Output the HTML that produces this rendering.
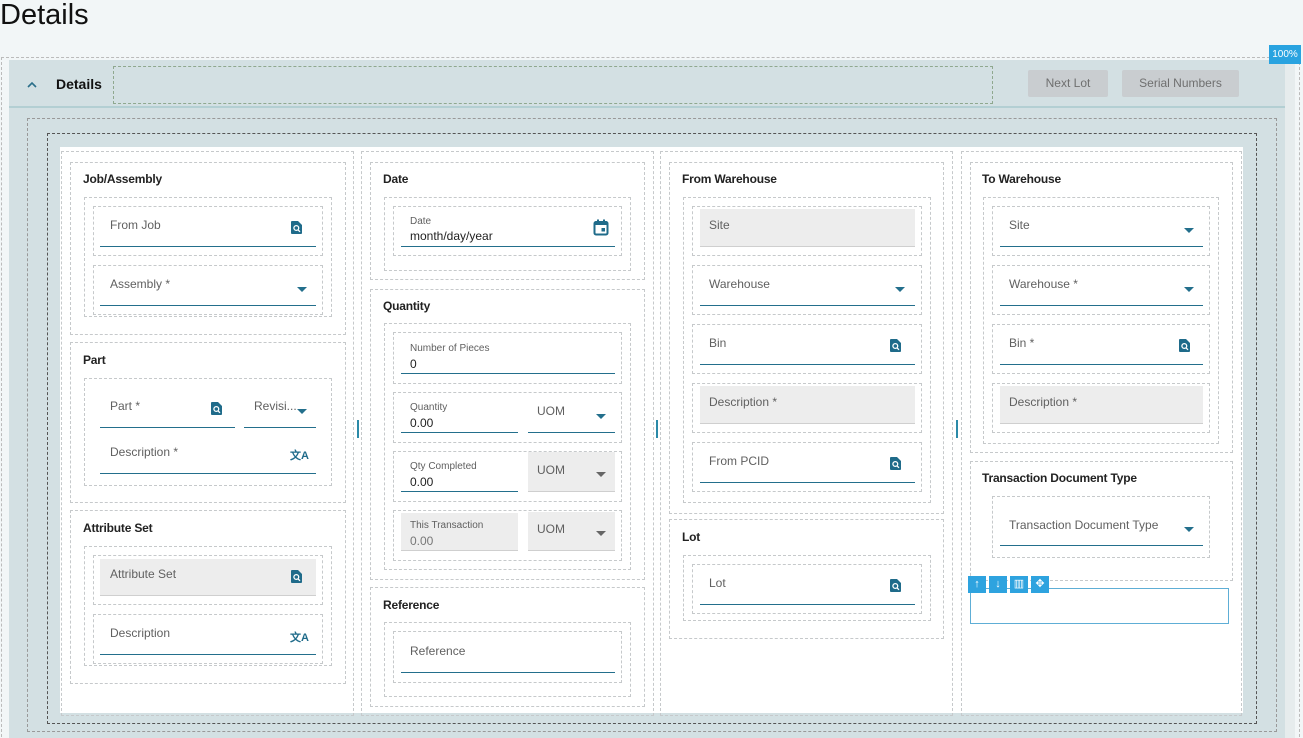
<!DOCTYPE html>
<html><head><meta charset="utf-8"><style>
*{box-sizing:border-box;margin:0;padding:0}
html,body{width:1303px;height:738px;overflow:hidden}
body{background:#f2f6f7;font-family:"Liberation Sans",sans-serif;position:relative;color:#222}
.a{position:absolute}
.d{position:absolute;border:1px dashed #c6c9cb}
.t{position:absolute;font-size:12px;font-weight:bold;color:#222;letter-spacing:-0.2px}
.l{position:absolute;font-size:12px;color:#606060}
.s{position:absolute;font-size:10px;color:#606060}
.v{position:absolute;font-size:12px;color:#222}
.u{position:absolute;height:1px;background:#236f8c}
.gr{position:absolute;background:#ededed;border-bottom:1px solid #cfcfcf}
.c{position:absolute;width:0;height:0;border-left:5px solid transparent;border-right:5px solid transparent;border-top:5px solid #236f8c}
.cg{border-top-color:#666}
.btn{position:absolute;background:#c9cdd0;color:#6f6f6f;font-size:12px;text-align:center;line-height:27px;border-radius:2px}
.tb{position:absolute;width:18px;height:17px;background:#2ea3df;color:#fff;font-size:11px;text-align:center;line-height:17px}
.tr{position:absolute;font-size:11px;color:#1f6b8a;font-weight:bold}
</style></head><body>
<div class="a" style="left:0;top:-1px;font-size:29px;color:#111">Details</div>
<div class="a" style="left:1px;top:57px;width:1299px;height:690px;border:1px dashed #bbb"></div>
<div class="a" style="left:9px;top:60px;width:1285px;height:690px;background:#d3e0e3"></div>
<div class="a" style="left:9px;top:106px;width:1285px;height:2px;background:#b3cfd3"></div>
<div class="a" style="left:1285px;top:60px;width:10px;height:680px;background:#e6eced"></div>
<div class="a" style="left:1269px;top:45px;width:32px;height:19px;background:#29a3e0;color:#fff;font-size:10px;line-height:19px;text-align:center">100%</div>
<div class="a" style="left:26px;top:78px;width:12px;height:12px"><svg width="12" height="12"><path d="M2 8 L6 4 L10 8" stroke="#2b6f8a" stroke-width="1.6" fill="none"/></svg></div>
<div class="a" style="left:56px;top:76px;font-size:14px;font-weight:bold;color:#111">Details</div>
<div class="a" style="left:113px;top:66px;width:880px;height:38px;border:1px dashed #8fa88f"></div>
<div class="btn" style="left:1028px;top:70px;width:80px">Next Lot</div>
<div class="btn" style="left:1122px;top:70px;width:117px">Serial Numbers</div>
<div class="a" style="left:27px;top:118px;width:1250px;height:614px;border:1px dashed #999"></div>
<div class="a" style="left:47px;top:133px;width:1210px;height:591px;border:1px dashed #555"></div>
<div class="a" style="left:60px;top:147px;width:1183px;height:566px;background:#fff"></div>
<div class="d" style="left:61px;top:151px;width:293px;height:565px"></div>
<div class="d" style="left:361px;top:151px;width:293px;height:565px"></div>
<div class="d" style="left:660px;top:151px;width:293px;height:565px"></div>
<div class="d" style="left:961px;top:151px;width:281px;height:565px"></div>
<div class="a" style="left:357px;top:420px;width:2px;height:18px;background:#2b8aa8"></div>
<div class="a" style="left:656px;top:420px;width:2px;height:18px;background:#2b8aa8"></div>
<div class="a" style="left:956px;top:420px;width:2px;height:18px;background:#2b8aa8"></div>

<!-- col1 -->
<div class="d" style="left:70px;top:162px;width:276px;height:173px"></div>
<div class="t" style="left:83px;top:172px">Job/Assembly</div>
<div class="d" style="left:84px;top:197px;width:248px;height:120px"></div>
<div class="d" style="left:93px;top:206px;width:230px;height:50px"></div>
<div class="l" style="left:110px;top:218px">From Job</div>
<div class="u" style="left:100px;top:246px;width:216px"></div>
<svg class="a" style="left:291px;top:221px" width="11" height="13"><path d="M1 0h6l4 4v8a1 1 0 0 1-1 1H1a1 1 0 0 1-1-1V1a1 1 0 0 1 1-1z" fill="#1f6b8a"/><circle cx="5.3" cy="7" r="2.4" stroke="#fff" stroke-width="1.3" fill="none"/><path d="M7 8.8l2 2" stroke="#fff" stroke-width="1.3"/></svg>
<div class="d" style="left:93px;top:265px;width:230px;height:50px"></div>
<div class="l" style="left:110px;top:277px">Assembly *</div>
<div class="c" style="left:297px;top:287px"></div>
<div class="u" style="left:100px;top:305px;width:216px"></div>

<div class="d" style="left:70px;top:342px;width:276px;height:161px"></div>
<div class="t" style="left:83px;top:353px">Part</div>
<div class="d" style="left:84px;top:378px;width:248px;height:108px"></div>
<div class="l" style="left:110px;top:399px">Part *</div>
<svg class="a" style="left:211px;top:402px" width="11" height="13"><path d="M1 0h6l4 4v8a1 1 0 0 1-1 1H1a1 1 0 0 1-1-1V1a1 1 0 0 1 1-1z" fill="#1f6b8a"/><circle cx="5.3" cy="7" r="2.4" stroke="#fff" stroke-width="1.3" fill="none"/><path d="M7 8.8l2 2" stroke="#fff" stroke-width="1.3"/></svg>
<div class="u" style="left:100px;top:427px;width:135px"></div>
<div class="l" style="left:254px;top:399px">Revisi...</div>
<div class="c" style="left:297px;top:409px"></div>
<div class="u" style="left:244px;top:427px;width:72px"></div>
<div class="l" style="left:110px;top:445px">Description *</div>
<div class="tr" style="left:290px;top:447px">文A</div>
<div class="u" style="left:100px;top:473px;width:216px"></div>

<div class="d" style="left:70px;top:510px;width:276px;height:174px"></div>
<div class="t" style="left:83px;top:521px">Attribute Set</div>
<div class="d" style="left:84px;top:546px;width:248px;height:120px"></div>
<div class="d" style="left:93px;top:555px;width:230px;height:50px"></div>
<div class="gr" style="left:100px;top:559px;width:216px;height:37px"></div>
<div class="l" style="left:110px;top:567px">Attribute Set</div>
<svg class="a" style="left:291px;top:570px" width="11" height="13"><path d="M1 0h6l4 4v8a1 1 0 0 1-1 1H1a1 1 0 0 1-1-1V1a1 1 0 0 1 1-1z" fill="#1f6b8a"/><circle cx="5.3" cy="7" r="2.4" stroke="#fff" stroke-width="1.3" fill="none"/><path d="M7 8.8l2 2" stroke="#fff" stroke-width="1.3"/></svg>
<div class="d" style="left:93px;top:614px;width:230px;height:50px"></div>
<div class="l" style="left:110px;top:626px">Description</div>
<div class="tr" style="left:290px;top:629px">文A</div>
<div class="u" style="left:100px;top:654px;width:216px"></div>

<!-- col2 -->
<div class="d" style="left:370px;top:162px;width:275px;height:118px"></div>
<div class="t" style="left:383px;top:172px">Date</div>
<div class="d" style="left:384px;top:197px;width:247px;height:74px"></div>
<div class="d" style="left:393px;top:206px;width:229px;height:50px"></div>
<div class="s" style="left:410px;top:216px">Date</div>
<div class="v" style="left:410px;top:229px">month/day/year</div>
<svg class="a" style="left:593px;top:219px" width="16" height="17"><rect x="1.5" y="3" width="13" height="12.5" rx="1.5" stroke="#1f6b8a" stroke-width="2" fill="none"/><rect x="1.5" y="3" width="13" height="3" fill="#1f6b8a"/><rect x="4" y="0.5" width="2" height="3" fill="#1f6b8a"/><rect x="10" y="0.5" width="2" height="3" fill="#1f6b8a"/><rect x="8.5" y="9" width="3.5" height="3.5" fill="#1f6b8a"/></svg>
<div class="u" style="left:401px;top:246px;width:214px"></div>

<div class="d" style="left:370px;top:289px;width:275px;height:291px"></div>
<div class="t" style="left:383px;top:299px">Quantity</div>
<div class="d" style="left:384px;top:323px;width:247px;height:247px"></div>
<div class="d" style="left:393px;top:332px;width:229px;height:52px"></div>
<div class="s" style="left:410px;top:343px">Number of Pieces</div>
<div class="v" style="left:410px;top:357px">0</div>
<div class="u" style="left:401px;top:373px;width:214px"></div>
<div class="d" style="left:393px;top:392px;width:229px;height:51px"></div>
<div class="s" style="left:410px;top:402px">Quantity</div>
<div class="v" style="left:410px;top:416px">0.00</div>
<div class="u" style="left:401px;top:432px;width:117px"></div>
<div class="l" style="left:537px;top:404px">UOM</div>
<div class="c" style="left:596px;top:414px"></div>
<div class="u" style="left:528px;top:432px;width:87px"></div>
<div class="d" style="left:393px;top:451px;width:229px;height:51px"></div>
<div class="s" style="left:410px;top:461px">Qty Completed</div>
<div class="v" style="left:410px;top:475px">0.00</div>
<div class="u" style="left:401px;top:491px;width:117px"></div>
<div class="gr" style="left:528px;top:452px;width:87px;height:40px"></div>
<div class="l" style="left:537px;top:463px">UOM</div>
<div class="c cg" style="left:596px;top:472px"></div>
<div class="d" style="left:393px;top:510px;width:229px;height:51px"></div>
<div class="gr" style="left:401px;top:513px;width:117px;height:38px"></div>
<div class="s" style="left:410px;top:520px">This Transaction</div>
<div class="a" style="left:410px;top:534px;font-size:12px;color:#777">0.00</div>
<div class="gr" style="left:528px;top:512px;width:87px;height:39px"></div>
<div class="l" style="left:537px;top:522px">UOM</div>
<div class="c cg" style="left:596px;top:531px"></div>

<div class="d" style="left:370px;top:587px;width:275px;height:120px"></div>
<div class="t" style="left:383px;top:598px">Reference</div>
<div class="d" style="left:384px;top:622px;width:247px;height:75px"></div>
<div class="d" style="left:393px;top:631px;width:229px;height:52px"></div>
<div class="l" style="left:410px;top:644px">Reference</div>
<div class="u" style="left:401px;top:672px;width:214px"></div>

<!-- col3 -->
<div class="d" style="left:669px;top:162px;width:275px;height:352px"></div>
<div class="t" style="left:682px;top:172px">From Warehouse</div>
<div class="d" style="left:683px;top:197px;width:248px;height:306px"></div>
<div class="d" style="left:692px;top:206px;width:230px;height:50px"></div>
<div class="gr" style="left:700px;top:209px;width:215px;height:38px"></div>
<div class="l" style="left:709px;top:218px">Site</div>
<div class="d" style="left:692px;top:265px;width:230px;height:50px"></div>
<div class="l" style="left:709px;top:277px">Warehouse</div>
<div class="c" style="left:895px;top:287px"></div>
<div class="u" style="left:700px;top:305px;width:215px"></div>
<div class="d" style="left:692px;top:324px;width:230px;height:50px"></div>
<div class="l" style="left:709px;top:336px">Bin</div>
<svg class="a" style="left:890px;top:339px" width="11" height="13"><path d="M1 0h6l4 4v8a1 1 0 0 1-1 1H1a1 1 0 0 1-1-1V1a1 1 0 0 1 1-1z" fill="#1f6b8a"/><circle cx="5.3" cy="7" r="2.4" stroke="#fff" stroke-width="1.3" fill="none"/><path d="M7 8.8l2 2" stroke="#fff" stroke-width="1.3"/></svg>
<div class="u" style="left:700px;top:364px;width:215px"></div>
<div class="d" style="left:692px;top:383px;width:230px;height:50px"></div>
<div class="gr" style="left:700px;top:386px;width:215px;height:38px"></div>
<div class="l" style="left:709px;top:395px">Description *</div>
<div class="d" style="left:692px;top:442px;width:230px;height:50px"></div>
<div class="l" style="left:709px;top:454px">From PCID</div>
<svg class="a" style="left:890px;top:457px" width="11" height="13"><path d="M1 0h6l4 4v8a1 1 0 0 1-1 1H1a1 1 0 0 1-1-1V1a1 1 0 0 1 1-1z" fill="#1f6b8a"/><circle cx="5.3" cy="7" r="2.4" stroke="#fff" stroke-width="1.3" fill="none"/><path d="M7 8.8l2 2" stroke="#fff" stroke-width="1.3"/></svg>
<div class="u" style="left:700px;top:482px;width:215px"></div>

<div class="d" style="left:669px;top:519px;width:275px;height:120px"></div>
<div class="t" style="left:682px;top:530px">Lot</div>
<div class="d" style="left:683px;top:555px;width:248px;height:66px"></div>
<div class="d" style="left:692px;top:564px;width:230px;height:50px"></div>
<div class="l" style="left:709px;top:576px">Lot</div>
<svg class="a" style="left:890px;top:579px" width="11" height="13"><path d="M1 0h6l4 4v8a1 1 0 0 1-1 1H1a1 1 0 0 1-1-1V1a1 1 0 0 1 1-1z" fill="#1f6b8a"/><circle cx="5.3" cy="7" r="2.4" stroke="#fff" stroke-width="1.3" fill="none"/><path d="M7 8.8l2 2" stroke="#fff" stroke-width="1.3"/></svg>
<div class="u" style="left:700px;top:604px;width:215px"></div>

<!-- col4 -->
<div class="d" style="left:970px;top:162px;width:263px;height:291px"></div>
<div class="t" style="left:982px;top:172px">To Warehouse</div>
<div class="d" style="left:983px;top:197px;width:236px;height:247px"></div>
<div class="d" style="left:992px;top:206px;width:218px;height:50px"></div>
<div class="l" style="left:1009px;top:218px">Site</div>
<div class="c" style="left:1184px;top:228px"></div>
<div class="u" style="left:1000px;top:246px;width:203px"></div>
<div class="d" style="left:992px;top:265px;width:218px;height:50px"></div>
<div class="l" style="left:1009px;top:277px">Warehouse *</div>
<div class="c" style="left:1184px;top:287px"></div>
<div class="u" style="left:1000px;top:305px;width:203px"></div>
<div class="d" style="left:992px;top:324px;width:218px;height:50px"></div>
<div class="l" style="left:1009px;top:336px">Bin *</div>
<svg class="a" style="left:1179px;top:339px" width="11" height="13"><path d="M1 0h6l4 4v8a1 1 0 0 1-1 1H1a1 1 0 0 1-1-1V1a1 1 0 0 1 1-1z" fill="#1f6b8a"/><circle cx="5.3" cy="7" r="2.4" stroke="#fff" stroke-width="1.3" fill="none"/><path d="M7 8.8l2 2" stroke="#fff" stroke-width="1.3"/></svg>
<div class="u" style="left:1000px;top:364px;width:203px"></div>
<div class="d" style="left:992px;top:383px;width:218px;height:50px"></div>
<div class="gr" style="left:1000px;top:386px;width:203px;height:38px"></div>
<div class="l" style="left:1009px;top:395px">Description *</div>

<div class="d" style="left:970px;top:461px;width:263px;height:120px"></div>
<div class="t" style="left:982px;top:471px">Transaction Document Type</div>
<div class="d" style="left:992px;top:496px;width:218px;height:62px"></div>
<div class="l" style="left:1009px;top:518px">Transaction Document Type</div>
<div class="c" style="left:1184px;top:527px"></div>
<div class="u" style="left:1000px;top:545px;width:203px"></div>

<div class="a" style="left:970px;top:588px;width:259px;height:36px;border:1px solid #5eaed6"></div>
<div class="tb" style="left:968px;top:576px">↑</div>
<div class="tb" style="left:989px;top:576px">↓</div>
<div class="tb" style="left:1010px;top:576px">▥</div>
<div class="tb" style="left:1031px;top:576px">✥</div>
</body></html>
